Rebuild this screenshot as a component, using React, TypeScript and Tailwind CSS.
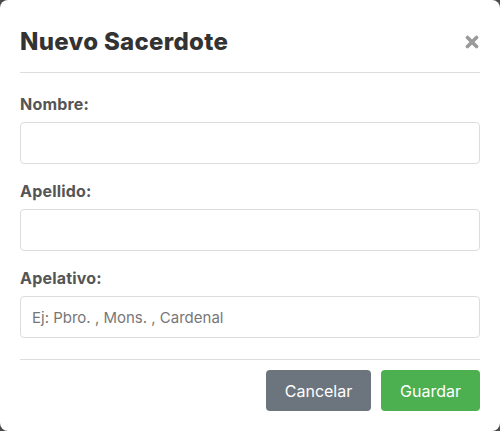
export default function App() {
  const fields = [
    { label: "Nombre:", placeholder: "" },
    { label: "Apellido:", placeholder: "" },
    { label: "Apelativo:", placeholder: "Ej: Pbro. , Mons. , Cardenal" },
  ];

  return (
    <div
      className="w-[500px] h-[431px] bg-[#4a4a4a]"
      style={{ fontFamily: "Inter, 'Noto Sans', sans-serif" }}
    >
      <div className="w-full h-full bg-white rounded-[8px] px-5 flex flex-col">
        {/* Header */}
        <div className="flex items-center justify-between h-[73px] pt-[12px] border-b border-[#dddddd]">
          <h2 className="text-[24px] font-extrabold text-[#333333] tracking-[0.3px]">Nuevo Sacerdote</h2>
          <button className="w-5 h-5 flex items-center justify-center -mr-0.5">
            <svg width="14" height="14" viewBox="0 0 14 14">
              <path d="M2.5 2.5 L11.5 11.5 M11.5 2.5 L2.5 11.5" stroke="#9a9a9a" strokeWidth="3.6" strokeLinecap="round" />
            </svg>
          </button>
        </div>

        {/* Body */}
        <div className="flex flex-col pt-[22px] pb-[21px] gap-[18px] border-b border-[#dddddd]">
          {fields.map((f) => (
            <div key={f.label} className="flex flex-col gap-[8px]">
              <label className="text-[16px] font-bold text-[#555555] leading-[19px] tracking-[0.2px]">{f.label}</label>
              <input
                type="text"
                placeholder={f.placeholder}
                className="h-[42px] w-full rounded-[4px] border border-[#dddddd] px-[11px] text-[15px] text-[#333] placeholder:text-[#777777] outline-none"
              />
            </div>
          ))}
        </div>

        {/* Footer */}
        <div className="flex justify-end gap-[10px] pt-[10px]">
          <button className="w-[105px] h-[41px] rounded-[4px] bg-[#6c757d] text-white text-[16px]">Cancelar</button>
          <button className="w-[99px] h-[41px] rounded-[4px] bg-[#4caf50] text-white text-[16px]">Guardar</button>
        </div>
      </div>
    </div>
  );
}
